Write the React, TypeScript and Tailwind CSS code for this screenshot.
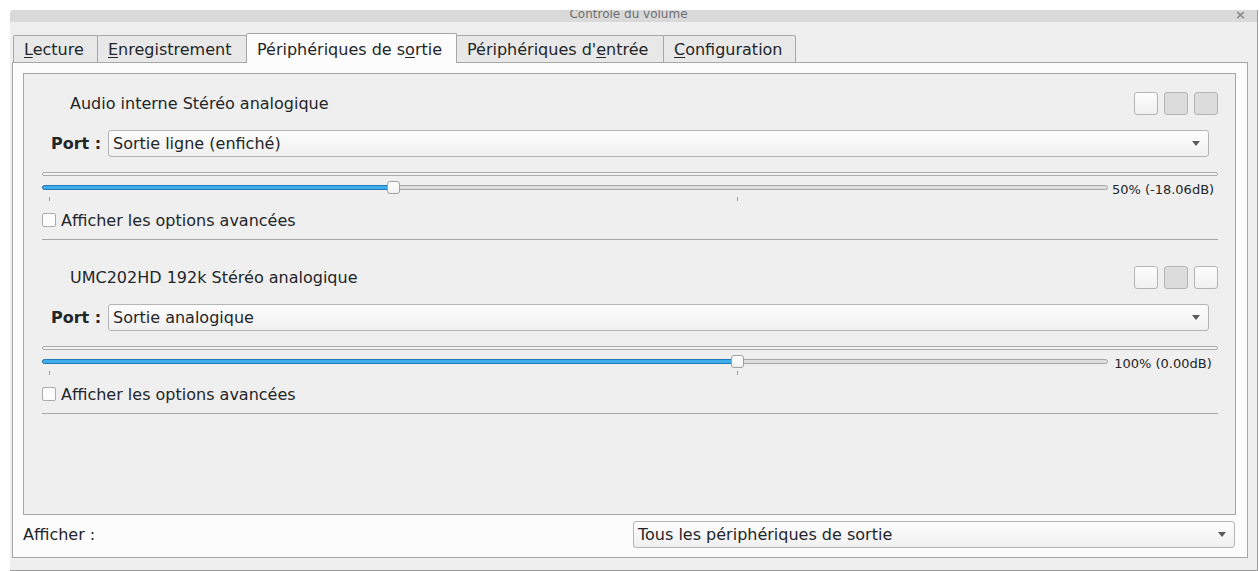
import React from 'react';

interface Device {
  name: string;
  port: string;
  percent: number;
  label: string;
  pressed: boolean[];
}

const devices: Device[] = [
  {
    name: 'Audio interne Stéréo analogique',
    port: 'Sortie ligne (enfiché)',
    percent: 50,
    label: '50% (-18.06dB)',
    pressed: [false, true, true],
  },
  {
    name: 'UMC202HD 192k Stéréo analogique',
    port: 'Sortie analogique',
    percent: 100,
    label: '100% (0.00dB)',
    pressed: [false, true, false],
  },
];

const Arrow: React.FC = () => (
  <svg width="8" height="5" viewBox="0 0 8 5" className="shrink-0">
    <path d="M0 0 L8 0 L4 5 Z" fill="#5a5a5a" />
  </svg>
);

const Combo: React.FC<{ text: string; className?: string }> = ({ text, className }) => (
  <div
    className={`h-[27px] flex items-center justify-between pl-[4px] pr-[8px] border border-[#b4b4b4] rounded-[3px] bg-linear-to-b from-[#fdfdfd] to-[#f0f0f0] ${className ?? ''}`}
  >
    <span>{text}</span>
    <Arrow />
  </div>
);

const Tab: React.FC<{ active?: boolean; width: string; children: React.ReactNode }> = ({ active, width, children }) => (
  <div
    className={
      active
        ? `relative z-10 -ml-px -mb-px h-[30px] pl-[10px] flex items-center bg-[#fcfcfc] border-t border-l border-r border-[#a6a6a6] rounded-t-[2px] ${width}`
        : `-ml-px first:ml-0 h-[27px] pl-[10px] flex items-center bg-[#e8e8e8] border-t border-l border-r border-[#a6a6a6] rounded-t-[2px] ${width}`
    }
  >
    <span className="leading-none whitespace-nowrap pt-[2px]">{children}</span>
  </div>
);

const DeviceBlock: React.FC<{ d: Device; first?: boolean }> = ({ d, first }) => {
  const center = 7 + d.percent * 6.88;
  return (
    <div className={`${first ? 'pt-[18px]' : 'pt-[26px]'} pl-[18px] pr-[17px]`}>
      <div className="h-[23px] flex items-center justify-between">
        <span className="ml-[28px]">{d.name}</span>
        <div className="flex gap-[6px]">
          {d.pressed.map((p, i) => (
            <div
              key={i}
              className={`w-[24px] h-[23px] rounded-[3px] border border-[#b4b4b4] ${
                p ? 'bg-[#dcdcdc]' : 'bg-linear-to-b from-[#fdfdfd] to-[#f0f0f0]'
              }`}
            />
          ))}
        </div>
      </div>

      <div className="mt-[15px] flex items-center">
        <span className="ml-[9px] w-[57px] font-bold">Port :</span>
        <Combo text={d.port} className="flex-1 mr-[9px]" />
      </div>

      <div className="mt-[15px] h-[4px] rounded-full border border-[#ababab] bg-[#f4f4f4]" />

      <div className="mt-[4px] flex items-center h-[15px]">
        <div className="relative w-[1066px] h-[15px] flex items-center">
          <div className="w-full h-[5px] rounded-full border border-[#a6a6a6] bg-[#dedede]" />
          <div
            className="absolute left-0 top-[5px] h-[5px] rounded-l-full border border-[#2677b5] bg-[#3daee9]"
            style={{ width: center }}
          />
          <div
            className="absolute top-[1px] w-[13px] h-[13px] rounded-[3px] border border-[#a0a0a0] bg-linear-to-b from-[#ffffff] to-[#f2f2f2]"
            style={{ left: center - 6 }}
          />
        </div>
        <span className="flex-1 text-center text-[13px] pt-[4px]">{d.label}</span>
      </div>

      <div className="relative h-[5px] mt-[2px]">
        <div className="absolute left-[7px] top-0 w-px h-[4px] bg-[#9a9a9a]" />
        <div className="absolute left-[695px] top-0 w-px h-[4px] bg-[#9a9a9a]" />
      </div>

      <div className="mt-[11px] h-[14px] flex items-center">
        <div className="w-[14px] h-[14px] border border-[#ababab] rounded-[2px] bg-[#fcfcfc]" />
        <span className="ml-[5px] pt-[2px]">Afficher les options avancées</span>
      </div>

      <div className="mt-[12px] h-px bg-[#a6a6a6]" />
    </div>
  );
};

export default function App() {
  return (
    <div className="w-[1259px] h-[571px] bg-white pt-[10px] pl-[10px] overflow-hidden font-['DejaVu_Sans',sans-serif] text-[16px] text-[#232629]">
      <div className="w-[1248px] h-[561px] bg-[#efefef] border-r border-b border-[#9c9c9c] rounded-tl-[4px] flex flex-col">
        <div className="relative h-[12px] bg-[#d9d9d9] rounded-tl-[4px] overflow-hidden flex justify-center">
          <span className="text-[12px] leading-[12px] -mt-[2px] pr-[10px] text-[#6e6e6e]">Contrôle du volume</span>
          <span className="absolute right-[11px] -top-[5px] text-[13px] font-bold text-[#8a8a8a]">×</span>
        </div>

        <div className="flex-1 pl-[2px] pr-[9px] pt-[11px]">
          <div className="flex items-end ml-px">
            <Tab width="w-[85px]">
              <span className="underline underline-offset-2">L</span>ecture
            </Tab>
            <Tab width="w-[150px]">
              <span className="underline underline-offset-2">E</span>nregistrement
            </Tab>
            <Tab active width="w-[211px]">
              Périphériques de s<span className="underline underline-offset-2">o</span>rtie
            </Tab>
            <Tab width="w-[208px]">
              Périphériques d'<span className="underline underline-offset-2">e</span>ntrée
            </Tab>
            <Tab width="w-[133px]">
              <span className="underline underline-offset-2">C</span>onfiguration
            </Tab>
          </div>

          <div className="h-[496px] border border-[#a6a6a6] bg-[#fcfcfc] pt-[10px] pl-[10px] pr-[11px]">
            <div className="h-[442px] border border-[#a6a6a6] bg-[#efefef]">
              {devices.map((d, i) => (
                <DeviceBlock key={d.name} d={d} first={i === 0} />
              ))}
            </div>

            <div className="mt-[6px] flex items-center">
              <span>Afficher :</span>
              <Combo text="Tous les périphériques de sortie" className="ml-auto mr-px w-[602px]" />
            </div>
          </div>
        </div>
      </div>
    </div>
  );
}
